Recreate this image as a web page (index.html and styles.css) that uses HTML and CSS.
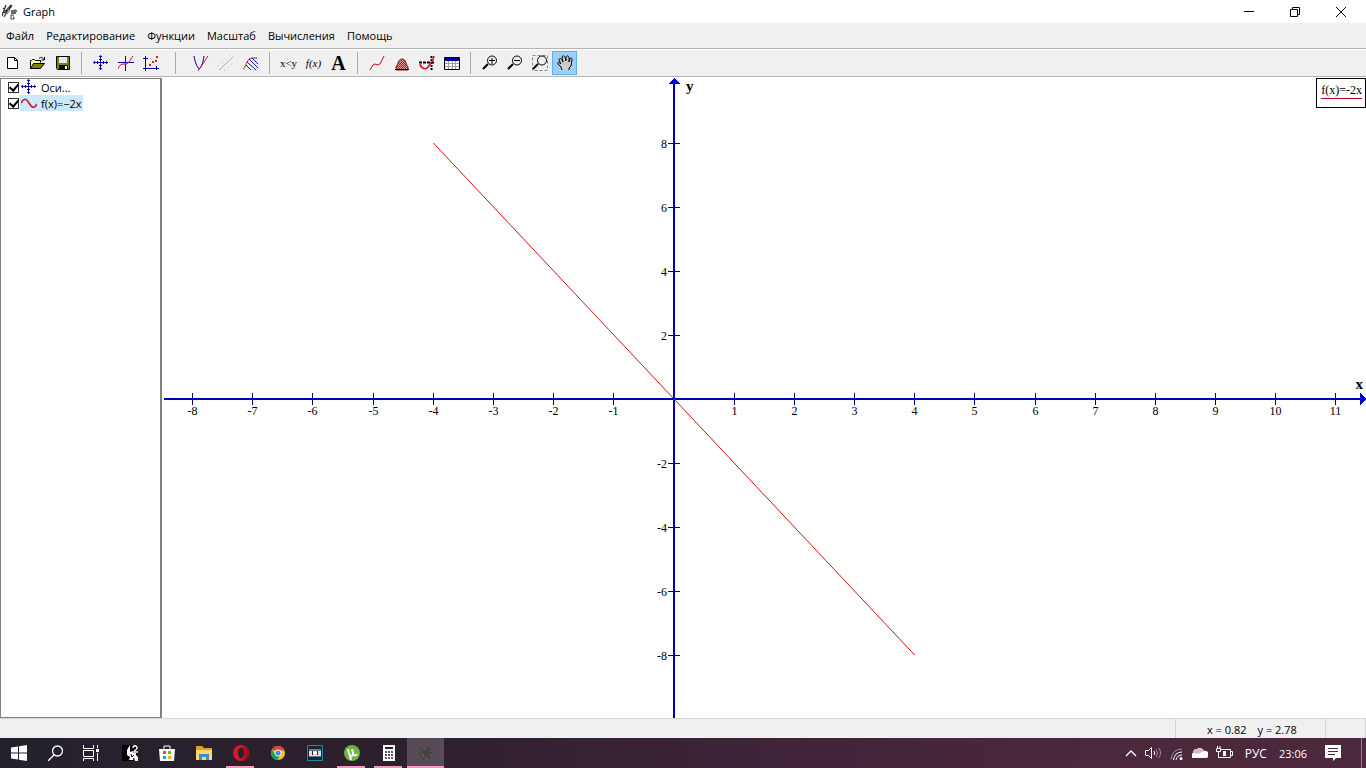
FILE: index.html
```html
<!DOCTYPE html>
<html lang="ru">

<head>
    <meta charset="UTF-8">
    <meta name="viewport" content="width=device-width, initial-scale=1.0">
    <title>Graph</title>
    <link rel="stylesheet" href="styles.css">
</head>

<body>
    <div class="app">
        <header class="titlebar">
            <svg class="logo" width="16" height="16" viewBox="0 0 16 16" fill="none" stroke="#3c3a38">
                <path d="M0 12L4 1M2 13L8 2M1 4l3 3 5-6M0 9l4-1 5-5 1-2M9 7h6M9 9h5" stroke-width="1.3" />
                <path d="M5 4l3 2-3 4M13 5v5" stroke="#666" />
                <path d="M12 11h-3v4h3v-2h-1" />
            </svg>
            <h1>Graph</h1>
            <div class="window-btns">
                <button aria-label="Свернуть"><svg width="12" height="12"><path d="M1 5.500h10" /></svg></button>
                <button aria-label="Восстановить"><svg width="12" height="12"><path d="M1.500 3.500h7v7h-7zM3.500 3.500v-2h7v7h-2" /></svg></button>
                <button aria-label="Закрыть"><svg width="12" height="12"><path d="M1 1l10 10M11 1L1 11" /></svg></button>
            </div>
        </header>

        <nav class="menu">
            <button>Файл</button>
            <button>Редактирование</button>
            <button>Функции</button>
            <button>Масштаб</button>
            <button>Вычисления</button>
            <button>Помощь</button>
        </nav>

        <div class="toolbar">
            <button aria-label="Создать"><svg viewBox="0 0 16 16"><path d="M2.500 2.500h7l3 3v8h-10z" fill="#fff" stroke="#000" /><path d="M9.500 2.500v3h3" fill="none" stroke="#000" /></svg></button>
            <button aria-label="Открыть"><svg viewBox="0 0 16 16"><path d="M.5 13.500v-8h1l1-1h2l1 1h5v2" fill="#ffff9c" stroke="#000" /><path d="M.5 13.500l3-5h11l-4 5z" fill="#808000" stroke="#000" /><path d="M9 3.500c2-2 4-1 5 1M14.500 2v3h-3" fill="none" stroke="#000" /></svg></button>
            <button aria-label="Сохранить"><svg viewBox="0 0 16 16"><path d="M1.500 1.500h13v13h-12l-1-1z" fill="#808000" stroke="#000" /><path d="M4 2h8v6H4z" fill="#e8e8e8" /><path d="M4 10h9v5H4z" fill="#000" /><path d="M10 11h2v3h-2z" fill="#fff" /></svg></button>
            <span class="sep"></span>
            <button aria-label="Оси"><svg viewBox="0 0 16 16"><use href="#axes" /></svg></button>
            <button aria-label="Вставить функцию"><svg viewBox="0 0 16 16" fill="none"><path d="M0 7.500h16M7.500 1v15" stroke="#0000a8" /><path d="M0 14c2-5 4-5 7-5 4 0 5-4 8-8" stroke="#c01030" /></svg></button>
            <button aria-label="Вставить серию точек"><svg viewBox="0 0 16 16"><path d="M2.500 1v15M0 13.500h16M0 3.500h5M13.500 11v4" stroke="#0000a8" fill="none" /><path d="M6 9h2v2H6zM9 6h2v2H9zM12 5h2v2h-2zM13 1h2v2h-2z" fill="#d02020" /></svg></button>
            <span class="sep sep-wide"></span>
            <button aria-label="Касательная"><svg viewBox="0 0 16 16" fill="none"><path d="M1 1c1 6 3 11 5 13 3-2 4-7 5-13" stroke="#000090" /><path d="M5 16L15 1" stroke="#c01030" /></svg></button>
            <button aria-label="Отрезок" disabled><svg viewBox="0 0 16 16" fill="none" stroke="#aaa"><path d="M1 15L15 2" /><path d="M0 11L12 0M6 16L16 7" stroke-dasharray="1 4" /></svg></button>
            <button aria-label="Заливка"><svg viewBox="0 0 16 16" fill="none"><path d="M0 14c3 0 3-11 9-11h5" stroke="#c01030" /><path d="M9 3l6 6M6 4l9 9M4 7l9 8M3 10l5 5" stroke="#1010a0" /></svg></button>
            <span class="sep"></span>
            <button class="relation" aria-label="Отношение">x&lt;y</button>
            <button class="fx" aria-label="Своя функция">f(x)</button>
            <button class="letter" aria-label="Надпись">A</button>
            <span class="sep"></span>
            <button aria-label="Длина кривой"><svg viewBox="0 0 16 16"><path d="M1 15l3-5 2-1 3 1 2-1 2-4 2-4" fill="none" stroke="#c01020" /></svg></button>
            <button aria-label="Площадь"><svg viewBox="0 0 16 16"><path d="M2 15v-3c2-2 2-8 6-8s4 6 6 8v3z" fill="url(#dots)" stroke="#801020" /><path d="M1 14.500h14" stroke="#000" /></svg></button>
            <button aria-label="Трассировка"><svg viewBox="0 0 16 16" fill="none"><path d="M0 7.500h16" stroke="#000" stroke-width="2" stroke-dasharray="3 1" /><path d="M12.500 1v15" stroke="#000" stroke-width="2" stroke-dasharray="2 1" /><path d="M1 9c1 5 6 6 8 3l5-7 1-4" stroke="#d01020" stroke-width="1.500" /></svg></button>
            <button aria-label="Таблица"><svg viewBox="0 0 16 16"><path d="M.5 2.500h15v12H.5z" fill="#fff" stroke="#000" /><path d="M1 3h14v3H1z" fill="#0000a0" /><path d="M4.500 6v8M8.500 6v8M11.500 6v8M1 8.500h14M1 11.500h14" stroke="#a0a0a0" /></svg></button>
            <span class="sep"></span>
            <button aria-label="Увеличить"><svg viewBox="0 0 16 16"><use href="#lens" /><path d="M7 5.500h6M10 3v6" stroke="#000" /></svg></button>
            <button aria-label="Уменьшить"><svg viewBox="0 0 16 16"><use href="#lens" /><path d="M7 5.500h6" stroke="#000" /></svg></button>
            <button aria-label="Масштаб окна"><svg viewBox="0 0 16 16"><path d="M.5.500h15v15H.5z" fill="none" stroke="#888" stroke-dasharray="3 2" /><use href="#lens" /></svg></button>
            <button class="active" aria-label="Переместить"><svg viewBox="0 0 16 16"><path d="M5 15l-1-3-3-3c-1-2 1-2 3 0L2 5c0-2 2-2 3 0l1 2-1-5c1-2 2-1 3 0l1 4V2c1-2 2-1 3 0v5l1-3c1-2 2-1 2 1l-1 6-2 2v2" fill="#ccc" stroke="#000" /></svg></button>
        </div>

        <main class="main">
            <ul class="list">
                <li class="item">
                    <input type="checkbox" id="axes-on" checked>
                    <label for="axes-on"><svg viewBox="0 0 16 16"><use href="#axes" /></svg>Оси...</label>
                </li>
                <li class="item selected">
                    <input type="checkbox" id="func-on" checked>
                    <label for="func-on"><svg viewBox="0 0 16 16"><path d="M0 8c3-5 5-5 8 0s5 6 8 1" fill="none" stroke="#d01020" stroke-width="1.500" /></svg>f(x)=−2x</label>
                </li>
            </ul>
            <div class="plot">
                <svg class="canvas"></svg>
                <div class="legend"><span>f(x)=-2x</span></div>
            </div>
        </main>

        <footer class="status">
            <div class="coords"><span>x = 0.82</span><span>y = 2.78</span></div>
            <div class="grip"></div>
        </footer>

        <div class="taskbar">
            <button class="task" aria-label="Пуск"><svg viewBox="0 0 16 16" fill="#fff"><path d="M0 2.500l7-1v6H0zM8 1.300L16 0v7.500H8zM0 8.500h7v6l-7-1zM8 8.500h8V16l-8-1.300z" /></svg></button>
            <button class="task" aria-label="Поиск"><svg viewBox="0 0 16 16" fill="none" stroke="#fff" stroke-width="1.300"><circle cx="9.500" cy="6" r="5" /><path d="M6 10l-6 6" /></svg></button>
            <button class="task" aria-label="Представление задач"><svg viewBox="0 0 20 16" fill="none" stroke="#fff"><path d="M.5 0v3.500h10V0M.5 5.500h10v6H.5zM.5 16v-2.500h10V16M14.500 0v3M14.500 8v8" /><path d="M13 4h3v3h-3z" fill="#fff" stroke="none" /></svg></button>
            <button class="task" aria-label="Игра"><svg viewBox="0 0 16 16"><path d="M0 0h16v16H0z" fill="#000" /><path d="M8 0L5 5v5l3 2-1 3h4l1-3 1 4h3v-4l-2-2V8h-3V6L8 7z" fill="#fff" /><path d="M11 3c0-3 4-3 4 0 0 2-3 2-3 4h4" fill="none" stroke="#fff" stroke-width="1.500" /><path d="M9 9l1 3 2-2" stroke="#000" fill="none" /></svg></button>
            <button class="task" aria-label="Магазин"><svg viewBox="0 0 16 16"><path d="M5 4V1h6v3" fill="none" stroke="#fff" /><path d="M0 4h16l-1 12H1z" fill="#fff" /><path d="M4 6h3v3H4z" fill="#e85020" /><path d="M9 6h3v3H9z" fill="#7db700" /><path d="M4 11h3v3H4z" fill="#1c9fe8" /><path d="M9 11h3v3H9z" fill="#f8b400" /></svg></button>
            <button class="task" aria-label="Проводник"><svg viewBox="0 0 16 16"><path d="M0 1h6l2 2h8v12H0z" fill="#dfa21c" /><path d="M0 5h16v10H0z" fill="#f9d86b" /><path d="M3 15V9h10v6h-3v-3H6v3z" fill="#3c8fd4" /></svg></button>
            <button class="task running" aria-label="Opera"><svg viewBox="0 0 16 16"><circle cx="8" cy="8" r="8" fill="#e01628" /><path d="M8 0a8 8 0 010 16c5-2 5-14 0-16" fill="#a80c1c" /><ellipse cx="8" cy="8" rx="3.200" ry="5.500" fill="#2b212c" /></svg></button>
            <button class="task" aria-label="Chrome"><svg viewBox="0 0 16 16"><circle cx="8" cy="8" r="7" fill="#f5c518" /><path d="M8 8L2 4.400A7 7 0 0114.500 5.500H8z" fill="#dd4335" /><path d="M2 4.400A7 7 0 007.500 15L10 10 5.500 10z" fill="#1b9d55" /><circle cx="8" cy="8" r="3.400" fill="#fff" /><circle cx="8" cy="8" r="2.600" fill="#4285f4" /></svg></button>
            <button class="task" aria-label="Видео"><svg viewBox="0 0 16 16"><path d="M.5.500h15v15H.5z" fill="#152a32" stroke="#168ea0" /><path d="M2 4h12v8H2z" fill="#777" /><path d="M2 6h12v5H2z" fill="#ddd" /><path d="M5 6h1v4H5zM10 6h1v4h-1z" fill="#222" /><path d="M6 7h4v2H6z" fill="#fff" /></svg></button>
            <button class="task running" aria-label="µTorrent"><svg viewBox="0 0 16 16"><circle cx="8" cy="8" r="8" fill="#6cb33f" /><path d="M4 4l1 5c1 3 5 2 4-1L8 4M9 8c0 3 3 3 4 1M6 11l1 4" fill="none" stroke="#fff" stroke-width="2" /></svg></button>
            <button class="task running" aria-label="Калькулятор"><svg viewBox="0 0 16 16"><path d="M2 0h12v16H2z" fill="#fff" /><path d="M4 2h8v2H4z" fill="#2b212c" /><path d="M4 7h8M4 10h8M4 13h8" stroke="#2b212c" stroke-width="1.500" stroke-dasharray="2 1" /></svg></button>
            <button class="task running current" aria-label="Graph"><svg viewBox="0 0 16 16" fill="none" stroke="#3e4038"><path d="M2 3l5 5 4-6M1 9l6-1 6-4M5 15l3-7 4 6M8 8h7M3 12l4-4" stroke-width="1.500" /><path d="M4 8l2 4" stroke="#74705a" /></svg></button>

            <div class="tray">
                <svg width="12" height="16" viewBox="0 0 12 16" fill="none" stroke="#fff" stroke-width="1.300"><path d="M1 11l5-5 5 5" /></svg>
                <svg width="17" height="16" viewBox="0 0 17 16" fill="none" stroke="#fff"><path d="M.5 5.500h3l3-3v11l-3-3h-3zM9 6q1.500 2 0 4" /><path d="M11 4q3 4 0 8M13.500 2.500q4 5.500 0 11" stroke="#a38d99" /></svg>
                <svg width="14" height="16" viewBox="0 0 14 16" fill="none" stroke="#fff"><path d="M6 15q1-5 6-5M3.500 15q1-8 8.500-8" /><path d="M1 14.500Q2 4 12 4" stroke="#a38d99" /><circle cx="11" cy="13.500" r="1.500" fill="#fff" stroke="none" /></svg>
                <svg width="16" height="16" viewBox="0 0 16 16"><path d="M2 13a2.500 2.500 0 01-1-5 4 4 0 014-4 4.500 4.500 0 017 2 3 3 0 012 7z" fill="#fff" /><path d="M1 8a4 4 0 014-4 4.500 4.500 0 017 2L6 9z" fill="#cabfc5" /></svg>
                <svg width="17" height="16" viewBox="0 0 17 16" fill="none" stroke="#fff"><path d="M5 4.500h9.500v8h-9M14.500 6.500h2v4h-2M.5 3.500h4v3h-4zM1.500 1v2M4 1v2M2.500 7v5.500h3" /><path d="M7 6h3v5H7z" fill="#fff" stroke="none" /></svg>
                <span class="lang">РУС</span>
                <time>23:06</time>
                <button class="notify" aria-label="Уведомления"><svg width="16" height="16" viewBox="0 0 16 16"><path d="M0 0h16v13h-5l-3 3v-3H0z" fill="#fff" /><path d="M3 3.500h10M3 6.500h10M3 9.500h7" stroke="#4b283b" /></svg></button>
            </div>
        </div>
    </div>

    <!-- общие значки -->
    <svg class="defs">
        <defs>
            <g id="axes"><path d="M7.500 1v14M1 7.500h14" stroke="#0000a8" /><path d="M4.500 6v3M10.500 6v3M6 4.500h3M6 10.500h3" stroke="#0000a8" /><path d="M7.500 0l2 2h-4zM7.500 15l2-2h-4zM0 7.500l2-2v4zM15 7.500l-2-2v4z" fill="#0000c0" /></g>
            <g id="lens" fill="none" stroke="#000"><circle cx="10" cy="5.500" r="4.500" /><path d="M6 9l-5 5" stroke-width="2" /></g>
            <pattern id="dots" width="2" height="2" patternUnits="userSpaceOnUse"><path d="M0 0h2v2H0z" fill="#e8a0a0" /><path d="M0 0h1v1H0zM1 1h1v1H1z" fill="#b01020" /></pattern>
        </defs>
    </svg>

    <script>
        let canvas = document.querySelector('.canvas')
        let ns = 'http://www.w3.org/2000/svg'
        let xMin = -8.51, xMax = 11.5
        let yMin = -9.97, yMax = 10.06

        function add(name, attrs, text) {
            let el = document.createElementNS(ns, name)
            for (let key in attrs) {
                el.setAttribute(key, attrs[key])
            }
            if (text !== undefined) {
                el.textContent = text
            }
            canvas.appendChild(el)
        }

        function line(x1, y1, x2, y2, cls) {
            add('line', { x1: x1, y1: y1, x2: x2, y2: y2, class: cls })
        }

        function draw() {
            let w = canvas.clientWidth
            let h = canvas.clientHeight
            let sx = w / (xMax - xMin)
            let sy = h / (yMax - yMin)
            let ox = Math.round(-xMin * sx)
            let oy = Math.round(yMax * sy)
            canvas.innerHTML = ''

            //оси
            line(2, oy, w - 4, oy, 'axis')
            line(ox, 4, ox, h, 'axis')
            add('path', { d: `M${w} ${oy}l-6 -6v12z`, class: 'tip' })
            add('path', { d: `M${ox} 1l-6 6h12z`, class: 'tip' })

            //деления
            for (let i = Math.ceil(xMin); i <= xMax; i++) {
                if (i === 0) continue
                let x = Math.floor(ox + i * sx) + 0.5
                line(x, oy - 6, x, oy + 6, 'tick')
                add('text', { x: x, y: oy + 16, class: 'num mid' }, i)
            }
            for (let i = -8; i <= 8; i += 2) {
                if (i === 0) continue
                let y = Math.round(oy - i * sy) + 0.5
                line(ox - 6, y, ox + 6, y, 'tick')
                add('text', { x: ox - 7, y: y + 4, class: 'num end' }, i)
            }
            add('text', { x: ox + 12, y: 14, class: 'name' }, 'y')
            add('text', { x: w - 3, y: oy - 10, class: 'name end' }, 'x')

            //f(x) = -2x
            line(ox - 4 * sx, oy - 8 * sy, ox + 4 * sx, oy + 8 * sy, 'func')
        }
        draw()
        window.addEventListener('resize', draw)
    </script>
</body>

</html>
```
FILE: styles.css
```css
* {
    margin: 0;
    padding: 0;
    box-sizing: border-box;
}

ul {
    list-style: none;
}

body {
    font-family: "Open Sans", "Noto Sans", sans-serif;
    font-size: 12px;
    color: #000;
    background: #fff;
}

button {
    border: 0;
    background: none;
    font: inherit;
    color: inherit;
}

svg {
    display: block;
    flex: none;
}

.defs {
    width: 0;
    height: 0;
    position: absolute;
}

.app {
    height: 100vh;
    display: flex;
    flex-direction: column;
    overflow: hidden;
}

.titlebar {
    height: 23px;
    padding-left: 2px;
    display: flex;
    align-items: center;
    gap: 5px;
}

.titlebar h1 {
    font-size: 11px;
    font-weight: normal;
}

.window-btns {
    margin-left: auto;
    display: flex;
}

.window-btns button {
    width: 46px;
    height: 22px;
    display: flex;
    align-items: center;
    justify-content: center;
}

.window-btns button:last-child {
    margin-right: 2px;
}

.window-btns path {
    fill: none;
    stroke: #000;
}

.menu {
    height: 26px;
    padding-left: 6px;
    display: flex;
    align-items: center;
    gap: 12px;
    font-size: 11px;
    background: #f0f0f0;
    border-bottom: 1px solid #b4b4b4;
}

.toolbar {
    height: 28px;
    display: flex;
    align-items: center;
    background: #f0f0f0;
    border-top: 1px solid #fff;
    border-bottom: 1px solid #b4b4b4;
}

.toolbar button {
    width: 25px;
    height: 24px;
    display: flex;
    align-items: center;
    justify-content: center;
}

.toolbar svg {
    width: 16px;
    height: 16px;
}

.toolbar .active {
    background: #99cff8;
    border: 1px solid #5fb0ea;
}

.toolbar .relation,
.toolbar .fx,
.toolbar .letter {
    font-family: "Liberation Serif", serif;
}

.toolbar .relation {
    font-size: 11px;
}

.toolbar .fx {
    font-size: 11px;
    font-style: italic;
}

.toolbar .letter {
    font-size: 20px;
    font-weight: bold;
}

.sep {
    width: 13px;
    height: 22px;
    display: flex;
    justify-content: center;
}

.sep::before {
    content: "";
    width: 1px;
    background: #a8a8a8;
}

.sep-wide {
    width: 25px;
}

.main {
    flex: 1;
    min-height: 0;
    display: flex;
}

.list {
    width: 162px;
    margin-top: 1px;
    padding-left: 7px;
    border: 1px solid #828282;
    border-right: 2px solid #828282;
}

.item {
    height: 16px;
    display: flex;
    align-items: center;
    gap: 1px;
}

.item input {
    appearance: none;
    width: 11px;
    height: 11px;
    border: 1px solid #333;
    display: flex;
    align-items: center;
    justify-content: center;
}

.item input:checked::before {
    content: "";
    width: 4px;
    height: 7px;
    margin-bottom: 2px;
    border: solid #000;
    border-width: 0 2px 2px 0;
    transform: rotate(40deg);
}

.item label {
    height: 16px;
    padding: 0 1px;
    display: flex;
    align-items: center;
    gap: 4px;
    font-size: 11px;
}

.item svg {
    width: 16px;
    height: 16px;
}

.selected label {
    background: #cce8ff;
}

.plot {
    flex: 1;
    min-width: 0;
    position: relative;
}

.canvas {
    width: 100%;
    height: 100%;
}

.axis {
    stroke: #0000b0;
    stroke-width: 2;
}

.tip {
    fill: #0000e0;
    shape-rendering: crispEdges;
}

.tick {
    stroke: #000080;
}

.func {
    stroke: #d01414;
}

.num {
    font: 12px "Liberation Serif", serif;
}

.mid {
    text-anchor: middle;
}

.end {
    text-anchor: end;
}

.name {
    font: bold 15px "Liberation Serif", serif;
}

.legend {
    height: 30px;
    padding: 4px 3px 4px 4px;
    position: absolute;
    top: 1px;
    right: 0;
    background: #fff;
    border: 1px solid #000;
    font: 12px/15px "Liberation Serif", serif;
}

.legend span {
    display: block;
    border-bottom: 1px solid #c00020;
}

.status {
    height: 20px;
    display: flex;
    justify-content: flex-end;
    background: #f0f0f0;
    border-top: 1px solid #d4d4d4;
}

.coords {
    width: 150px;
    padding: 3px 0 0 31px;
    display: flex;
    gap: 11px;
    border-left: 1px solid #d4d4d4;
    font-size: 11px;
    line-height: 16px;
}

.grip {
    width: 41px;
    border: solid #d4d4d4;
    border-width: 0 1px;
}

.taskbar {
    height: 30px;
    display: flex;
    background: linear-gradient(90deg, #24212c, #2d202c 30%, #42243a 60%, #4b283b 80%);
    color: #fff;
}

.task {
    width: 37px;
    display: flex;
    align-items: center;
    justify-content: center;
    position: relative;
}

.task svg {
    height: 16px;
}

.running::after {
    content: "";
    height: 2px;
    position: absolute;
    left: 4px;
    right: 5px;
    bottom: 0;
    background: #f09cb8;
}

.current {
    background: #584a56;
}

.current::after {
    left: 0;
    right: 0;
}

.tray {
    margin-left: auto;
    padding-right: 4px;
    display: flex;
    align-items: center;
    gap: 8px;
}

.lang,
.tray time {
    margin-left: 4px;
}

.tray time {
    font-size: 11px;
}

.notify {
    height: 30px;
    padding: 0 20px 0 10px;
    display: flex;
    align-items: center;
    border-right: 1px solid #93808c;
}
```
